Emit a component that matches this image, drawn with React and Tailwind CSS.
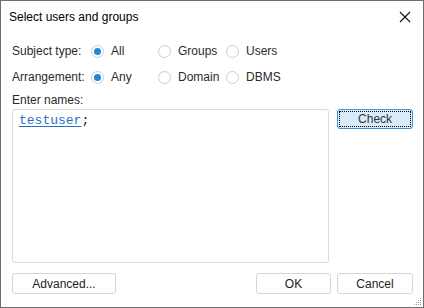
// Windows-style "Select users and groups" dialog
const Radio = ({ checked, label }) => {
  return (
    <div className="flex items-center gap-[7px]">
      <span className="w-[13px] h-[13px] rounded-full border border-[#cdcdcd] bg-white flex items-center justify-center">
        {checked && <span className="w-[7px] h-[7px] rounded-full bg-[#1e87d9]" />}
      </span>
      <span>{label}</span>
    </div>
  );
};

const Button = ({ children, className = "" }) => {
  return (
    <button
      className={`h-[21px] rounded-[3px] border border-[#d6d6d6] bg-white text-[12px] text-[#222] flex items-center justify-center ${className}`}
    >
      {children}
    </button>
  );
};

const App = () => {
  return (
    <div
      className="w-[424px] h-[308px] bg-white border border-[#6f6f6f] flex flex-col text-[12px] text-[#2b2b2b] relative"
      style={{ fontFamily: '"Liberation Sans", Arial, sans-serif' }}
    >
      {/* Title bar */}
      <div className="h-[31px] flex items-center justify-between pl-[8px] pr-[10px] text-[12px] text-black">
        <span>Select users and groups</span>
        <svg width="12" height="12" viewBox="0 0 12 12" className="mr-[2px]">
          <path d="M1 1 L11 11 M11 1 L1 11" stroke="#111" strokeWidth="1.1" />
        </svg>
      </div>

      <div className="flex flex-col pl-[11px] pr-[10px] flex-1">
        {/* Radio rows */}
        <div className="grid grid-cols-[79px_67px_68px_auto] auto-rows-[26px] items-center mt-[6px]">
          <span>Subject type:</span>
          <Radio checked label="All" />
          <Radio label="Groups" />
          <Radio label="Users" />
          <span>Arrangement:</span>
          <Radio checked label="Any" />
          <Radio label="Domain" />
          <Radio label="DBMS" />
        </div>

        <div className="h-[17px] leading-[17px] mt-[2px]">Enter names:</div>

        <div className="flex gap-[8px]">
          <div className="w-[318px] h-[154px] border border-[#dadada] rounded-[3px] px-[6px] pt-[1px]">
            <span
              className="text-[13px] leading-[18px]"
              style={{ fontFamily: '"Liberation Mono", "Courier New", monospace' }}
            >
              <span className="text-[#1f73c9] underline decoration-[#1f73c9] underline-offset-2">testuser</span>
              <span className="text-[#222]">;</span>
            </span>
          </div>
          <button className="w-[76px] h-[20px] rounded-[3px] border border-[#3d95d8] bg-[#d9ecfb] p-[1px] text-[12px] text-[#333]">
            <span className="w-full h-full flex items-center justify-center border border-dotted border-black">
              Check
            </span>
          </button>
        </div>

        {/* Footer buttons */}
        <div className="flex items-center mt-[10px]">
          <Button className="w-[104px]">Advanced...</Button>
          <div className="flex-1" />
          <Button className="w-[75px]">OK</Button>
          <Button className="w-[76px] ml-[6px]">Cancel</Button>
        </div>
      </div>

      {/* Resize grip */}
      <svg width="10" height="10" viewBox="0 0 10 10" className="absolute right-[1px] bottom-[1px]">
        {[
          [8, 2], [6, 4], [8, 4], [4, 6], [6, 6], [8, 6], [2, 8], [4, 8], [6, 8], [8, 8],
        ].map(([x, y]) => (
          <rect key={`${x}-${y}`} x={x} y={y} width="1" height="1" fill="#a0a0a0" />
        ))}
      </svg>
    </div>
  );
};

export default App;
